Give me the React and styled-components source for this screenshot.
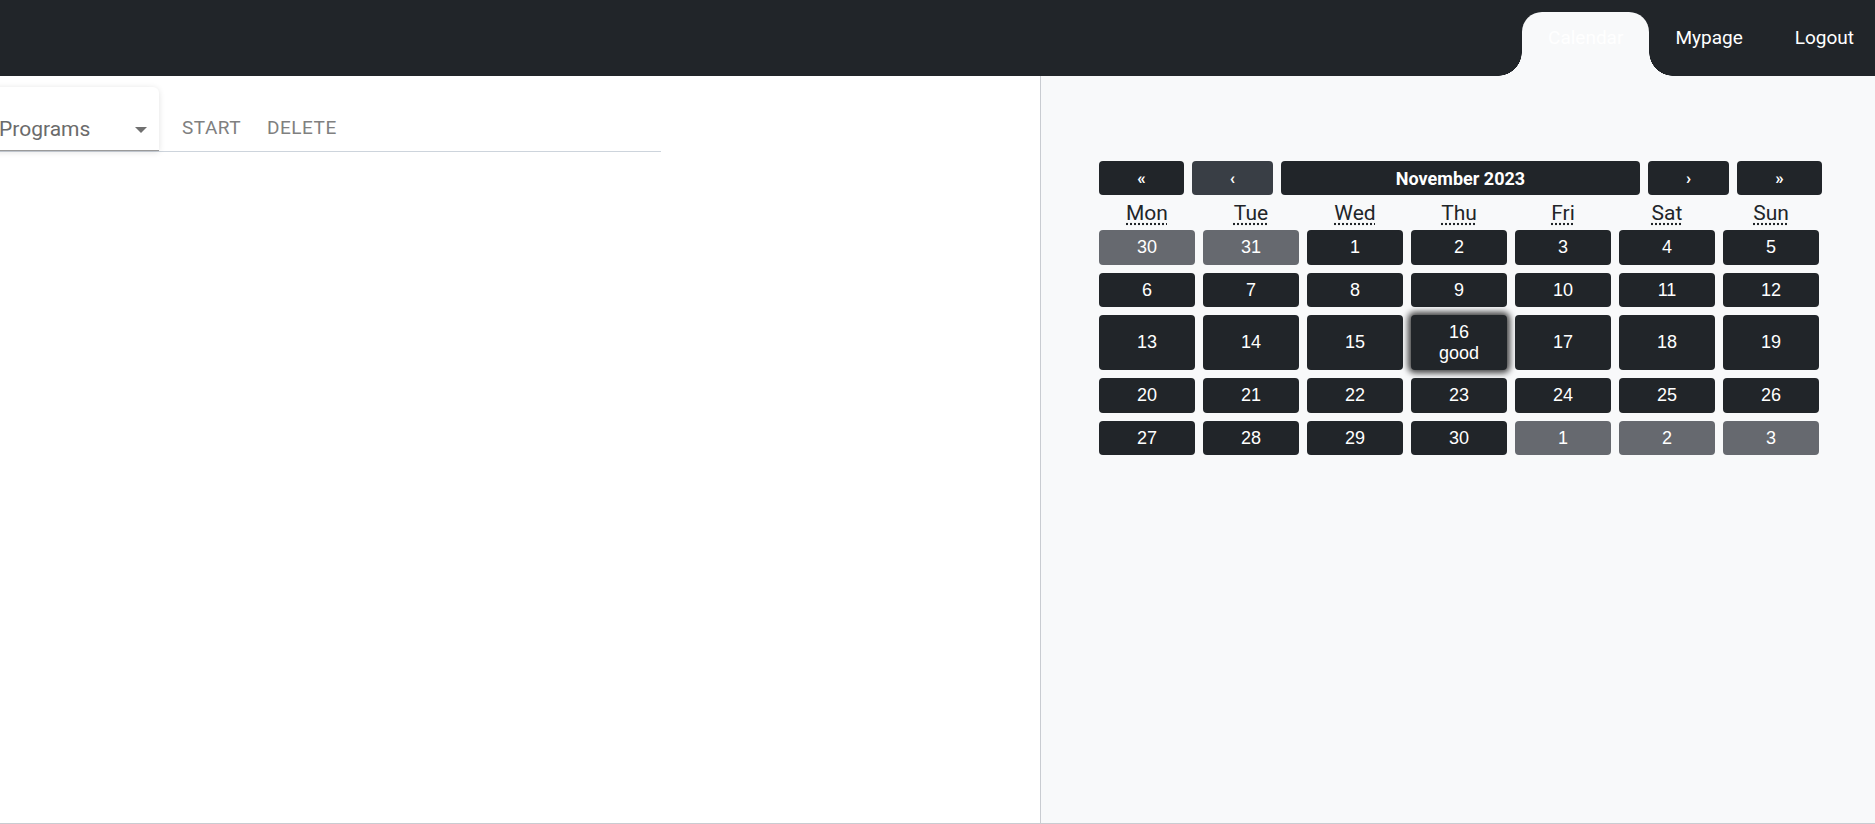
import React from 'react';
import styled, { createGlobalStyle } from 'styled-components';

const GlobalStyle = createGlobalStyle`
  * { box-sizing: border-box; }
  body {
    margin: 0;
    font-family: Roboto, "Liberation Sans", Arial, sans-serif;
    background: #fff;
    overflow: hidden;
  }
`;

const Header = styled.header`
  height: 76px;
  margin-right: -5px;
  background: #212529;
  display: flex;
  justify-content: flex-end;
  align-items: flex-end;
`;

const NavItem = styled.div`
  position: relative;
  height: 64px;
  padding: 0 26px 14px;
  display: flex;
  align-items: center;
  color: #fff;
  font-size: 19px;
  background: ${p => (p.active ? '#f8f9fa' : 'transparent')};
  border-radius: ${p => (p.active ? '20px 20px 0 0' : '0')};

  ${p => p.active && `
    &::before, &::after {
      content: '';
      position: absolute;
      bottom: 0;
      width: 24px;
      height: 24px;
    }
    &::before {
      left: -24px;
      background: radial-gradient(circle at 0 0, transparent 23.5px, #f8f9fa 24px);
    }
    &::after {
      right: -24px;
      background: radial-gradient(circle at 100% 0, transparent 23.5px, #f8f9fa 24px);
    }
  `}
`;

const Main = styled.main`
  display: flex;
  height: calc(100vh - 76px);
  border-bottom: 1px solid #c9ccd1;
`;

const LeftPanel = styled.section`
  width: 1041px;
  background: #fff;
  border-right: 1px solid #c9ccd1;
  padding-top: 11px;
`;

const TabBar = styled.div`
  width: 661px;
  display: flex;
  align-items: flex-end;
  border-bottom: 1px solid #cdd4dc;
`;

const Select = styled.div`
  position: relative;
  width: 172px;
  height: 64px;
  margin-left: -13px;
  margin-right: 10px;
  padding: 30px 12px 10px;
  background: #fff;
  border-radius: 6px 6px 0 0;
  border-bottom: 1px solid #9a9a9a;
  box-shadow: 0 1px 6px rgba(0, 0, 0, 0.12);
  color: #6b6b6b;
  font-size: 21px;
  line-height: 24px;
`;

const Caret = styled.span`
  position: absolute;
  left: 148px;
  top: 40px;
  width: 0;
  height: 0;
  border-left: 6.5px solid transparent;
  border-right: 6.5px solid transparent;
  border-top: 6.5px solid #707070;
`;

const TabButton = styled.button`
  height: 48px;
  padding: 0 13px;
  border: none;
  background: none;
  font-family: Roboto, "Liberation Sans", Arial, sans-serif;
  font-size: 19px;
  letter-spacing: 0.5px;
  text-transform: uppercase;
  color: #808080;
  cursor: pointer;
`;

const RightPanel = styled.section`
  flex: 1;
  background: #f8f9fa;
  padding: 85px 0 0 58px;
`;

const Calendar = styled.div`
  width: 723px;
`;

const NavRow = styled.div`
  display: flex;
  gap: 8px;
  margin-bottom: 6px;
`;

const NavButton = styled.button`
  flex: ${p => (p.wide ? '1' : `0 0 ${p.w}px`)};
  height: 34px;
  border: none;
  border-radius: 4px;
  background: ${p => (p.hover ? '#393e45' : '#212529')};
  color: #fff;
  font-family: Roboto, "Liberation Sans", Arial, sans-serif;
  font-weight: 700;
  font-size: ${p => (p.wide ? '18px' : '17px')};
`;

const Grid = styled.div`
  width: 720px;
  display: grid;
  grid-template-columns: repeat(7, 96px);
  column-gap: 8px;
  row-gap: 8px;
`;

const Weekday = styled.div`
  text-align: center;
  font-size: 21px;
  color: #212529;
  line-height: 24px;
  margin-bottom: -3px;

  abbr {
    text-decoration: underline dotted;
    text-underline-offset: 3px;
  }
`;

const Day = styled.button`
  border: none;
  border-radius: 4px;
  padding: 7px 0;
  background: ${p => (p.muted ? '#66696f' : '#212529')};
  color: #fff;
  font-family: "Liberation Sans", Arial, sans-serif;
  font-size: 18px;
  line-height: 20.5px;
  box-shadow: ${p => (p.marked ? '0 0 6px 3px rgba(0, 0, 0, 0.75)' : 'none')};
  display: flex;
  flex-direction: column;
  align-items: center;
  justify-content: center;
`;

const weekdays = [
  ['Mon', 'Monday'],
  ['Tue', 'Tuesday'],
  ['Wed', 'Wednesday'],
  ['Thu', 'Thursday'],
  ['Fri', 'Friday'],
  ['Sat', 'Saturday'],
  ['Sun', 'Sunday'],
];

const days = [
  { n: 30, muted: true },
  { n: 31, muted: true },
  ...Array.from({ length: 30 }, (_, i) => ({ n: i + 1 })),
  { n: 1, muted: true },
  { n: 2, muted: true },
  { n: 3, muted: true },
];

const notes = { 16: 'good' };

const App = () => {
  return (
    <>
      <GlobalStyle />
      <Header>
        <NavItem active>Calendar</NavItem>
        <NavItem>Mypage</NavItem>
        <NavItem>Logout</NavItem>
      </Header>
      <Main>
        <LeftPanel>
          <TabBar>
            <Select>
              Programs
              <Caret />
            </Select>
            <TabButton>Start</TabButton>
            <TabButton>Delete</TabButton>
          </TabBar>
        </LeftPanel>
        <RightPanel>
          <Calendar>
            <NavRow>
              <NavButton w={85}>«</NavButton>
              <NavButton w={81} hover>‹</NavButton>
              <NavButton wide>November 2023</NavButton>
              <NavButton w={81}>›</NavButton>
              <NavButton w={85}>»</NavButton>
            </NavRow>
            <Grid>
              {weekdays.map(([s, l]) => (
                <Weekday key={s}>
                  <abbr title={l}>{s}</abbr>
                </Weekday>
              ))}
              {days.map((d, i) => {
                const note = !d.muted && notes[d.n];
                return (
                  <Day key={i} muted={d.muted} marked={!!note}>
                    <span>{d.n}</span>
                    {note && <span>{note}</span>}
                  </Day>
                );
              })}
            </Grid>
          </Calendar>
        </RightPanel>
      </Main>
    </>
  );
};

export default App;
